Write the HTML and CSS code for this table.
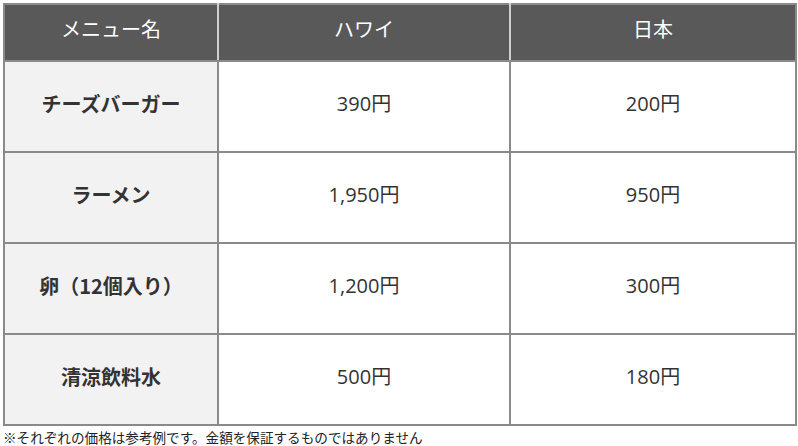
FILE: index.html
```html
<!DOCTYPE html>
<html lang="ja">
<head>
<meta charset="utf-8">
<link rel="stylesheet" href="styles.css">
</head>
<body>
<table class="price">
  <colgroup>
    <col class="c1"><col class="c2"><col class="c3">
  </colgroup>
  <thead>
    <tr><th>メニュー名</th><th>ハワイ</th><th>日本</th></tr>
  </thead>
  <tbody>
    <tr><td class="name">チーズバーガー</td><td>390円</td><td>200円</td></tr>
    <tr><td class="name">ラーメン</td><td>1,950円</td><td>950円</td></tr>
    <tr><td class="name">卵（12個入り）</td><td>1,200円</td><td>300円</td></tr>
    <tr><td class="name">清涼飲料水</td><td>500円</td><td>180円</td></tr>
  </tbody>
</table>
<p class="note">※それぞれの価格は参考例です。金額を保証するものではありません</p>
</body>
</html>
```
FILE: styles.css
```css
html, body {
  margin: 0;
  padding: 0;
  background: #ffffff;
}
body {
  padding: 3px 0 0 3px;
  font-family: "Open Sans", "Noto Sans CJK JP", sans-serif;
  color: #333333;
}
.price {
  border-collapse: collapse;
  width: 792px;
  table-layout: fixed;
}
.c1 { width: 214px; }
.c2 { width: 292px; }
.c3 { width: 286px; }
.price th {
  background: #595959;
  color: #ffffff;
  font-weight: normal;
  font-size: 20px;
  line-height: 24px;
  height: 49px;
  padding: 0 0 6px 0;
  border: 2px solid #8a8a8a;
  border-left-color: #d0d0d0;
  border-right-color: #d0d0d0;
  text-align: center;
  vertical-align: middle;
}
.price thead th:first-child { border-left-color: #8a8a8a; }
.price thead th:last-child { border-right-color: #8a8a8a; }
.price td {
  height: 84px;
  padding: 0 0 5px 0;
  border: 2px solid #8a8a8a;
  text-align: center;
  vertical-align: middle;
  font-size: 20px;
  line-height: 24px;
  color: #333333;
}
.price td.name {
  background: #f2f2f2;
  font-weight: bold;
  font-family: "Noto Sans CJK JP", sans-serif;
}
.note {
  margin: 3px 0 0 0;
  font-size: 13.6px;
  color: #222222;
  line-height: 16px;
  font-family: "Noto Sans CJK JP", sans-serif;
}
```
